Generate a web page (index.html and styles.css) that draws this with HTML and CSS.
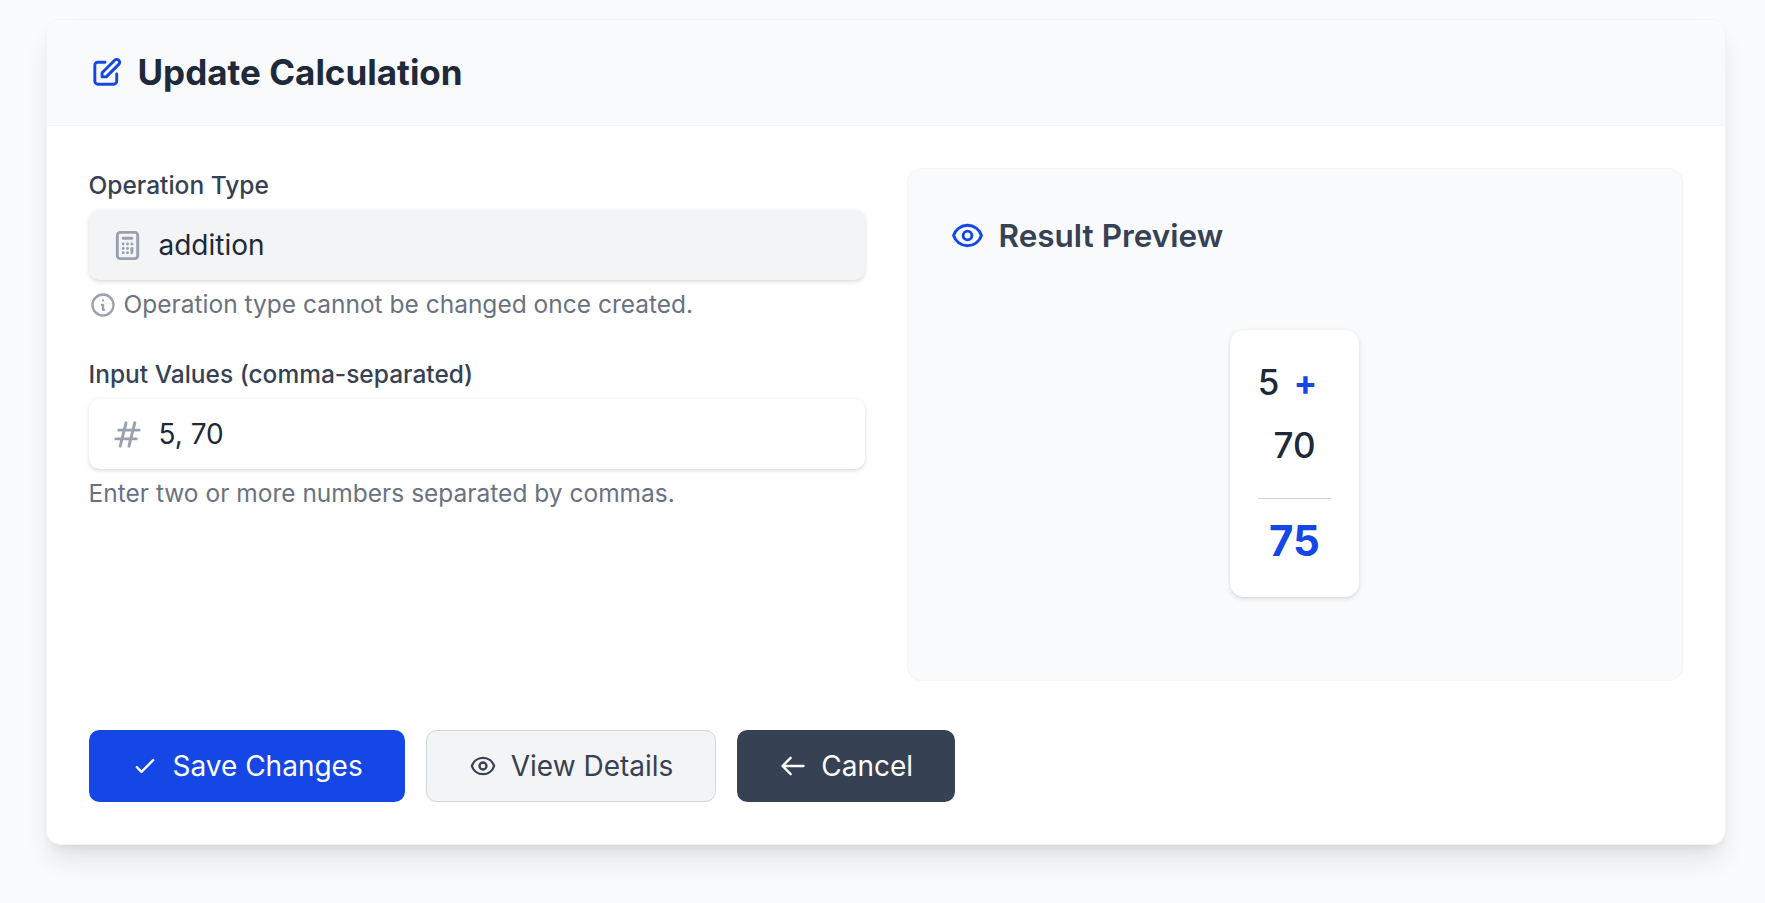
FILE: index.html
```html
<!DOCTYPE html>
<html lang="en">
<head>
<meta charset="utf-8">
<title>Update Calculation</title>
<link rel="stylesheet" href="styles.css">
</head>
<body>
<main class="card">
  <header class="card-header">
    <svg class="icon accent" viewBox="0 0 24 24"><path d="M11 5H6a2 2 0 00-2 2v11a2 2 0 002 2h11a2 2 0 002-2v-5m-1.414-9.414a2 2 0 112.828 2.828L11.828 15H9v-2.828l8.586-8.586z"/></svg>
    <h1 class="title">Update Calculation</h1>
  </header>
  <div class="card-body">
    <div class="columns">
      <div class="fields">
        <div class="field">
          <div class="label">Operation Type</div>
          <div class="input input-disabled">
            <svg class="icon muted" viewBox="0 0 24 24"><path d="M9 7h6m0 10v-3m-3 3h.01M9 17h.01M9 14h.01M12 14h.01M15 11h.01M12 11h.01M9 11h.01M7 21h10a2 2 0 002-2V5a2 2 0 00-2-2H7a2 2 0 00-2 2v14a2 2 0 002 2z"/></svg>
            <span>addition</span>
          </div>
          <div class="help">
            <svg class="icon icon-sm muted" viewBox="0 0 24 24"><path d="M13 16h-1v-4h-1m1-4h.01M21 12a9 9 0 11-18 0 9 9 0 0118 0z"/></svg>
            <span>Operation type cannot be changed once created.</span>
          </div>
        </div>
        <div class="field">
          <div class="label">Input Values (comma-separated)</div>
          <div class="input">
            <svg class="icon muted" viewBox="0 0 24 24"><path d="M7 20l4-16m2 16l4-16M6 9h14M4 15h14"/></svg>
            <span>5, 70</span>
          </div>
          <div class="help">Enter two or more numbers separated by commas.</div>
        </div>
      </div>
      <section class="preview">
        <div class="preview-header">
          <svg class="icon accent" viewBox="0 0 24 24"><path d="M15 12a3 3 0 11-6 0 3 3 0 016 0z"/><path d="M2.458 12C3.732 7.943 7.523 5 12 5c4.478 0 8.268 2.943 9.542 7-1.274 4.057-5.064 7-9.542 7-4.477 0-8.268-2.943-9.542-7z"/></svg>
          <h2 class="subtitle">Result Preview</h2>
        </div>
        <div class="preview-body">
          <div class="result">
            <div class="operands">
              <span>5</span><span class="operator">+</span><span>70</span>
            </div>
            <div class="total">75</div>
          </div>
        </div>
      </section>
    </div>
    <div class="actions">
      <button class="btn btn-primary"><svg class="icon icon-sm" viewBox="0 0 24 24"><path d="M5 13l4 4L19 7"/></svg><span>Save Changes</span></button>
      <button class="btn btn-light"><svg class="icon icon-sm" viewBox="0 0 24 24"><path d="M15 12a3 3 0 11-6 0 3 3 0 016 0z"/><path d="M2.458 12C3.732 7.943 7.523 5 12 5c4.478 0 8.268 2.943 9.542 7-1.274 4.057-5.064 7-9.542 7-4.477 0-8.268-2.943-9.542-7z"/></svg><span>View Details</span></button>
      <button class="btn btn-dark"><svg class="icon icon-sm" viewBox="0 0 24 24"><path d="M10 19l-7-7m0 0l7-7m-7 7h18"/></svg><span>Cancel</span></button>
    </div>
  </div>
</main>
</body>
</html>
```
FILE: styles.css
```css
* { box-sizing: border-box; }
body {
  margin: 0;
  padding: 19px 39.5px 0 45.5px;
  background: #f9fafb;
  color: #1e2939;
  font-family: Inter, "Liberation Sans", sans-serif;
  font-size: 28px;
  line-height: 42px;
  height: 903px;
  overflow: hidden;
}
h1, h2 { margin: 0; }
.icon {
  width: 35px;
  height: 35px;
  flex: none;
  fill: none;
  stroke: currentColor;
  stroke-width: 2;
  stroke-linecap: round;
  stroke-linejoin: round;
}
.icon-sm { width: 28px; height: 28px; }
.accent { color: #1447e6; }
.muted { color: #99a1af; }

.card {
  background: #fff;
  border: 1px solid #f3f4f6;
  border-radius: 14px;
  box-shadow: 0 17.5px 26.25px -5.25px rgba(0, 0, 0, .1), 0 7px 10.5px -7px rgba(0, 0, 0, .1);
  overflow: hidden;
}
.card-header {
  display: flex;
  align-items: center;
  gap: 14px;
  padding: 28px 42px;
  background: #f9fafb;
  border-bottom: 1px solid #f3f4f6;
}
.title { font-size: 35px; line-height: 49px; font-weight: 700; }
.card-body { padding: 42px; }
.columns { display: grid; grid-template-columns: 1fr 1fr; gap: 42px; }
.fields { display: flex; flex-direction: column; gap: 35px; }
.field { display: flex; flex-direction: column; gap: 7px; }
.label { font-size: 24.5px; line-height: 35px; font-weight: 500; color: #364153; }
.input {
  display: flex;
  align-items: center;
  gap: 14px;
  height: 70px;
  padding: 0 21px;
  border-radius: 10.5px;
  background: #fff;
  color: #1e2939;
  box-shadow: 0 1.75px 5.25px rgba(0, 0, 0, .1), 0 1.75px 3.5px -1.75px rgba(0, 0, 0, .1);
}
.input-disabled { background: #f3f4f6; }
.help {
  display: flex;
  align-items: center;
  gap: 7px;
  font-size: 24.5px;
  line-height: 35px;
  color: #6a7282;
}

.preview {
  display: flex;
  flex-direction: column;
  padding: 42px;
  background: #f9fafb;
  border: 1px solid #f3f4f6;
  border-radius: 14px;
}
.preview-header { display: flex; align-items: center; gap: 14px; margin-bottom: 28px; }
.subtitle { font-size: 31.5px; line-height: 49px; font-weight: 600; color: #364153; }
.preview-body { display: flex; align-items: center; justify-content: center; height: 350px; }
.result {
  width: 129px;
  padding: 28px;
  background: #fff;
  border-radius: 14px;
  box-shadow: 0 1.75px 5.25px rgba(0, 0, 0, .1), 0 1.75px 3.5px -1.75px rgba(0, 0, 0, .1);
}
.operands {
  display: flex;
  flex-wrap: wrap;
  justify-content: center;
  row-gap: 14px;
  margin: 0 -4px;
  font-size: 35px;
  line-height: 49px;
  font-weight: 500;
}
.operator { margin: 0 14px; color: #1447e6; font-weight: 700; }
.total {
  margin-top: 28px;
  padding-top: 14px;
  border-top: 1px solid #d1d5dc;
  color: #1447e6;
  font-size: 42px;
  line-height: 56px;
  font-weight: 700;
  text-align: center;
}

.actions { display: flex; gap: 21px; margin-top: 49px; }
.btn {
  display: flex;
  align-items: center;
  gap: 14px;
  padding: 15px 42px;
  border: 0;
  border-radius: 10.5px;
  font: inherit;
  white-space: nowrap;
}
.btn-primary { background: #1447e6; color: #fff; }
.btn-light { padding: 14px 42px; background: #f3f4f6; border: 1px solid #d1d5dc; color: #364153; }
.btn-dark { background: #364153; color: #fff; }
```
